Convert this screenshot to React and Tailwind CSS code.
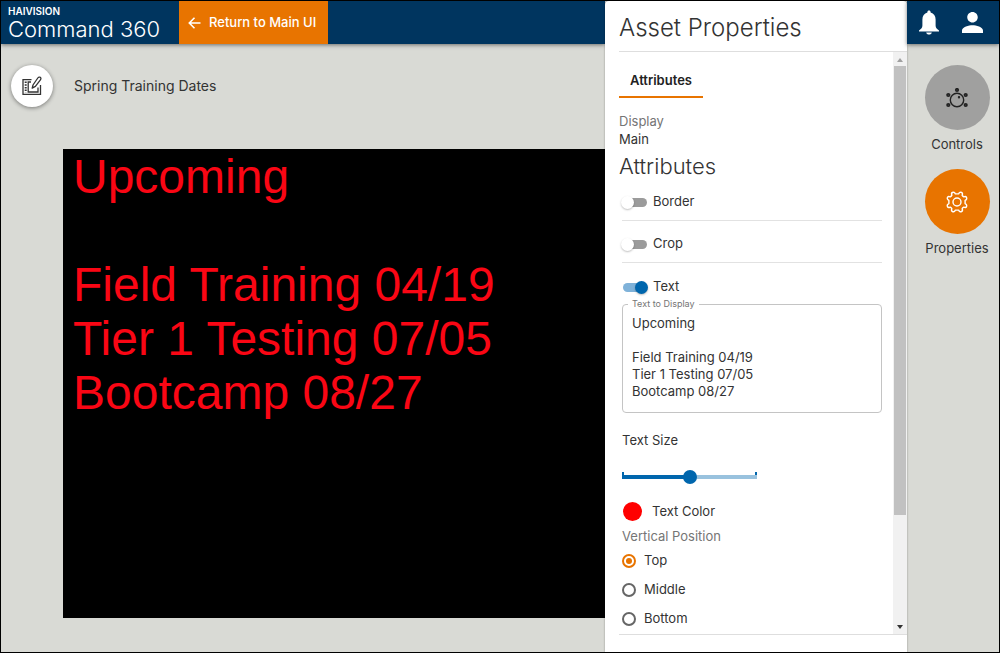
import { useState } from "react";

const POSITIONS = ["Top", "Middle", "Bottom"];

function BellIcon() {
  return (
    <svg width="20" height="25" viewBox="0 0 20 25" fill="white" aria-hidden="true">
      <path d="M10 0.5c1 0 1.6 0.7 1.6 1.6v0.5c3.2 0.8 5 3.4 5 7v6c0 2 1.1 3.4 3.4 5v0.8H0v-0.8c2.3-1.6 3.4-3 3.4-5v-6c0-3.6 1.8-6.2 5-7v-0.5c0-0.9 0.6-1.6 1.6-1.6z" />
      <path d="M7.2 22.4h5.6c-0.3 1.3-1.4 2.1-2.8 2.1s-2.5-0.8-2.8-2.1z" />
    </svg>
  );
}

function PersonIcon() {
  return (
    <svg width="21" height="21" viewBox="4 4 16 16" fill="white" aria-hidden="true">
      <path d="M12 12c2.21 0 4-1.79 4-4s-1.79-4-4-4-4 1.79-4 4 1.79 4 4 4zm0 2c-2.67 0-8 1.34-8 4v2h16v-2c0-2.66-5.33-4-8-4z" />
    </svg>
  );
}

function EditIcon() {
  return (
    <svg width="20" height="20" viewBox="0 0 20 20" fill="none" stroke="#333" strokeWidth="1.3" aria-hidden="true">
      <path d="M9.5 3.7H1v14.7h17.5V9" />
      <path d="M9 6H6.2v10H16v-4.5" />
      <path d="M3.7 5.5v11" strokeWidth="2" strokeDasharray="1.5 1.2" />
      <path d="M11 9l4.8-7c0.7-1 1.8-1.2 2.5-0.7s0.9 1.5 0.1 2.5L13.4 10.4l-3.2 1.7z" strokeLinejoin="round" />
    </svg>
  );
}

function ControlsIcon() {
  return (
    <svg width="22" height="20" viewBox="0 0 22 20" fill="none" stroke="#222" strokeWidth="1.4" aria-hidden="true">
      <circle cx="11" cy="12" r="6.7" />
      <circle cx="13" cy="9.3" r="0.5" fill="#222" />
      <g strokeWidth="1.8">
        <circle cx="11" cy="2" r="1.2" />
        <circle cx="2.3" cy="7" r="1.2" />
        <circle cx="19.7" cy="7" r="1.2" />
        <circle cx="2.3" cy="17" r="1.2" />
        <circle cx="19.7" cy="17" r="1.2" />
      </g>
    </svg>
  );
}

function GearIcon() {
  return (
    <svg width="22" height="22" viewBox="0 0 22 22" fill="none" stroke="white" strokeWidth="1.4" strokeLinejoin="round" aria-hidden="true">
      <path d="M9.4 2.9C8.8 1.4 7.6 0.9 6.4 1.5S5.3 3 5.9 4.2Q5.3 5.3 4.2 5.9C3 5.3 2 5.3 1.5 6.4S1.4 8.8 2.9 9.4V12.6C1.4 13.2 0.9 14.4 1.5 15.6S3 16.7 4.2 16.1Q5.3 16.7 5.9 17.8C5.3 19 5.3 20 6.4 20.5S8.8 20.6 9.4 19.1H12.6C13.2 20.6 14.4 21.1 15.6 20.5S16.7 19 16.1 17.8Q16.7 16.7 17.8 16.1C19 16.7 20 16.7 20.5 15.6S20.6 13.2 19.1 12.6V9.4C20.6 8.8 21.1 7.6 20.5 6.4S19 5.3 17.8 5.9Q16.7 5.3 16.1 4.2C16.7 3 16.7 2 15.6 1.5S13.2 1.4 12.6 2.9Z" />
      <circle cx="11" cy="11" r="4" />
    </svg>
  );
}

function Toggle({ label, checked, onChange }) {
  return (
    <label className="flex h-4 items-center gap-1.5 pl-px text-[13px]">
      <input
        type="checkbox"
        checked={checked}
        onChange={(e) => onChange(e.target.checked)}
        className="relative h-[9px] w-6 appearance-none rounded-full bg-[#9b9b9b] before:absolute before:-top-0.5 before:-left-0.5 before:size-[13px] before:rounded-full before:bg-white before:shadow-[0_1px_2px_rgba(0,0,0,0.25)] checked:bg-[#7fb2d9] checked:before:left-3 checked:before:bg-[#0066ad]"
      />
      {label}
    </label>
  );
}

function SideButton({ label, className, children }) {
  return (
    <button type="button" className="flex flex-col items-center gap-1 text-[13px] leading-5">
      <span className={`flex size-[65px] items-center justify-center rounded-full ${className}`}>
        {children}
      </span>
      {label}
    </button>
  );
}

function ScrollBar() {
  return (
    <div className="flex w-3.5 shrink-0 flex-col items-center bg-[#f1f1f1]" aria-hidden="true">
      <svg className="h-3.5 w-2 shrink-0" viewBox="0 0 8 14" fill="#a0a0a0">
        <path d="M1 10l3-4 3 4z" />
      </svg>
      <div className="flex w-full flex-1 flex-col px-px">
        <div className="h-[81%] bg-[#c1c1c1]" />
      </div>
      <svg className="h-3.5 w-2 shrink-0" viewBox="0 0 8 14" fill="#333">
        <path d="M1 5h6l-3 4z" />
      </svg>
    </div>
  );
}

function App() {
  const [border, setBorder] = useState(false);
  const [crop, setCrop] = useState(false);
  const [showText, setShowText] = useState(true);
  const [text, setText] = useState(
    "Upcoming\n\nField Training 04/19\nTier 1 Testing 07/05\nBootcamp 08/27"
  );
  const [size, setSize] = useState(50);
  const [position, setPosition] = useState("Top");

  return (
    <div className="flex h-screen border border-black bg-[#d9dad5] font-['Inter','Liberation_Sans',sans-serif] text-[#333]">
      <div className="flex min-w-0 flex-1 flex-col">
        <header className="flex h-[43px] shrink-0 bg-[#00355f] text-white shadow-[0_1px_4px_rgba(0,0,0,0.5)]">
          <div className="flex w-[178px] flex-col pt-1 pl-[7px]">
            <span className="text-[10px] leading-3 font-semibold">HAIVISION</span>
            <span className="text-[22px] leading-6 font-light">Command 360</span>
          </div>
          <button
            type="button"
            className="flex items-center gap-2 bg-[#e87400] px-[9px] pr-3 text-[13px] font-medium"
          >
            <svg width="13" height="12" viewBox="0 0 13 12" fill="none" stroke="white" strokeWidth="1.6" aria-hidden="true">
              <path d="M6.5 0.8L1.3 6l5.2 5.2M1.3 6H12.5" />
            </svg>
            Return to Main UI
          </button>
        </header>

        <div className="flex items-center gap-[21px] pt-[21px] pl-2.5">
          <button
            type="button"
            aria-label="Edit"
            className="flex size-[42px] items-center justify-center rounded-full bg-white shadow-[0_1px_4px_rgba(0,0,0,0.45)]"
          >
            <EditIcon />
          </button>
          <h1 className="text-sm">Spring Training Dates</h1>
        </div>

        <main className="flex min-h-0 flex-1 pt-[42px] pb-[34px] pl-[62px]">
          <div className="flex-1 overflow-hidden bg-black pt-px pl-2.5 font-['Liberation_Sans',Arial,sans-serif] text-5xl leading-[54px] whitespace-pre text-[#fa0614]">
            {showText && text}
          </div>
        </main>
      </div>

      <aside className="flex w-[302px] shrink-0 flex-col rounded-t-sm bg-white pl-3.5 shadow-[0_0_2px_rgba(0,0,0,0.4)]">
        <h2 className="shrink-0 border-b border-[#dedede] pt-2.5 pb-1.5 text-2xl leading-[34px] font-light">
          Asset Properties
        </h2>

        <div className="flex min-h-0 flex-1 border-b border-[#dedede]">
          <div className="min-w-0 flex-1 overflow-hidden pt-3.5 pr-[11px]">
            <div role="tablist" className="flex">
              <button
                type="button"
                role="tab"
                aria-selected="true"
                className="h-8 border-b-2 border-[#e87400] px-[11px] text-[13px] font-semibold text-[#222]"
              >
                Attributes
              </button>
            </div>

            <dl className="mt-3.5 text-[13px] leading-[18px]">
              <dt className="text-[#757575]">Display</dt>
              <dd>Main</dd>
            </dl>
            <h3 className="mt-1 text-[22px] leading-7 font-light">Attributes</h3>

            <div className="pl-[3px] text-[13px]">
              <div className="border-b border-[#e2e2e2] pt-3.5 pb-2.5">
                <Toggle label="Border" checked={border} onChange={setBorder} />
              </div>
              <div className="border-b border-[#e2e2e2] pt-[15px] pb-2.5">
                <Toggle label="Crop" checked={crop} onChange={setCrop} />
              </div>
              <div className="pt-4">
                <Toggle label="Text" checked={showText} onChange={setShowText} />
              </div>

              <fieldset className="mt-[3px] h-[115px] rounded-sm border border-[#c4c4c4] px-[5px]">
                <legend className="px-1 text-[9px] leading-3 text-[#757575]">
                  <label htmlFor="display-text">Text to Display</label>
                </legend>
                <textarea
                  id="display-text"
                  value={text}
                  onChange={(e) => setText(e.target.value)}
                  rows={5}
                  className="mt-[5px] block w-full resize-none overflow-hidden px-1 text-[13px] leading-[17px] outline-none"
                />
              </fieldset>

              <label htmlFor="text-size" className="mt-[18px] block leading-[18px]">
                Text Size
              </label>
              <div className="relative mt-[21px] flex h-3.5 w-[135px]">
                <span className="absolute top-0.5 left-0 h-[7px] w-0.5 bg-[#0066ad]" />
                <span className="absolute top-0.5 right-0 h-[7px] w-0.5 bg-[#0066ad]" />
                <input
                  id="text-size"
                  type="range"
                  min="0"
                  max="100"
                  value={size}
                  onChange={(e) => setSize(Number(e.target.value))}
                  style={{
                    backgroundImage: `linear-gradient(to right, #0066ad ${size}%, #99c2de ${size}%)`,
                  }}
                  className="relative w-full appearance-none bg-[length:100%_4px] bg-center bg-no-repeat [&::-webkit-slider-thumb]:size-3.5 [&::-webkit-slider-thumb]:appearance-none [&::-webkit-slider-thumb]:rounded-full [&::-webkit-slider-thumb]:bg-[#0066ad]"
                />
              </div>

              <button type="button" className="mt-[17px] flex items-center gap-2.5 pl-px leading-5">
                <span className="size-[19px] rounded-full bg-[#ff0000]" />
                Text Color
              </button>

              <fieldset className="mt-1.5">
                <legend className="leading-[18px] text-[#757575]">Vertical Position</legend>
                <div className="flex flex-col gap-[9px] pt-1.5">
                  {POSITIONS.map((p) => (
                    <label key={p} className="flex h-5 items-center gap-2">
                      <input
                        type="radio"
                        name="vertical-position"
                        checked={position === p}
                        onChange={() => setPosition(p)}
                        className="flex size-3.5 appearance-none items-center justify-center rounded-full border-2 border-[#666] before:size-2 before:rounded-full checked:border-[#e87400] checked:before:size-1.5 checked:before:bg-[#e87400]"
                      />
                      {p}
                    </label>
                  ))}
                </div>
              </fieldset>
            </div>
          </div>
          <ScrollBar />
        </div>
        <div className="h-[17px] shrink-0" />
      </aside>

      <div className="flex w-[92px] shrink-0 flex-col">
        <div className="flex h-[43px] shrink-0 items-center gap-[23px] bg-[#00355f] pl-3 shadow-[0_1px_4px_rgba(0,0,0,0.5)]">
          <button type="button" aria-label="Notifications">
            <BellIcon />
          </button>
          <button type="button" aria-label="Account">
            <PersonIcon />
          </button>
        </div>
        <nav className="flex flex-col items-center gap-[15px] pt-[21px] pl-2">
          <SideButton label="Controls" className="bg-[#a0a09f]">
            <ControlsIcon />
          </SideButton>
          <SideButton label="Properties" className="bg-[#e87400]">
            <GearIcon />
          </SideButton>
        </nav>
      </div>
    </div>
  );
}

export default App;
